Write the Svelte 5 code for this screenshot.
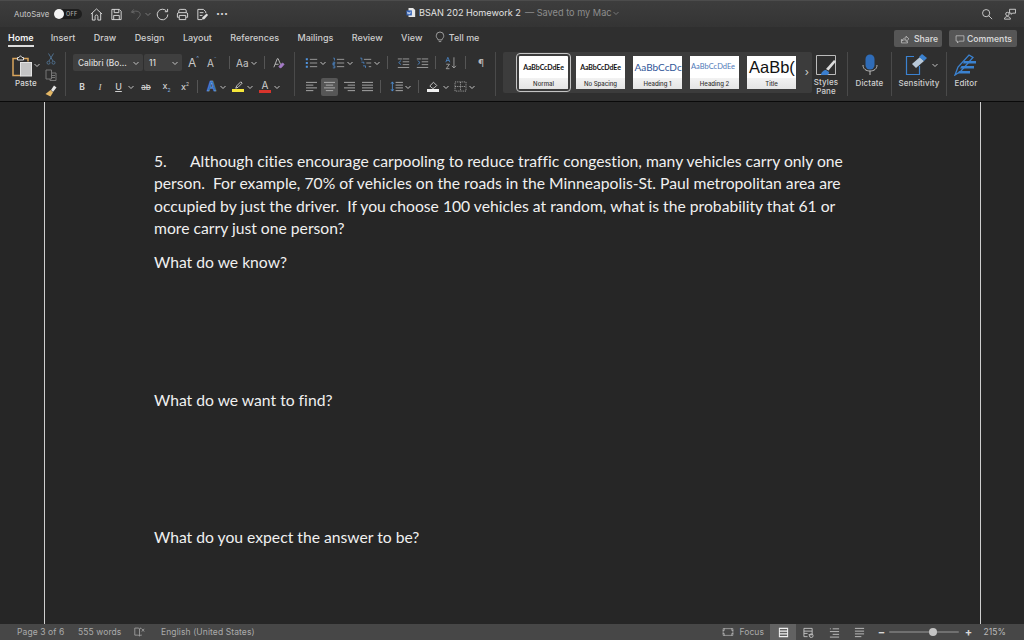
<script>
  const tabs = ['Home','Insert','Draw','Design','Layout','References','Mailings','Review','View'];
</script>

<div class="app">
  <header class="titlebar">
    <div class="qa">
      <span class="autosave">AutoSave</span>
      <span class="toggle"><i></i><b>OFF</b></span>
      <svg class="ic" viewBox="0 0 14 14"><path d="M1 6.500 7 1l6 5.500M2.500 5.500v7.500h3V9c0-2 3-2 3 0v4h3V5.500"/></svg>
      <svg class="ic" viewBox="0 0 14 14"><path d="M2 1.500h8l2 2v9H2zM4.500 1.500V5h5V1.500M4 12.500V8h6v4.500"/></svg>
      <svg class="ic dim" viewBox="0 0 14 14"><path d="M4 1.500 1.500 4.500 5 5.500M2 4.500c3-2 9-1.500 9 2.500 0 2-2 3-3.500 5.500"/></svg>
      <svg class="chev" viewBox="0 0 8 8"><path d="M1.500 3 4 5.500 6.500 3"/></svg>
      <svg class="ic" viewBox="0 0 14 14"><path d="M11.500 3.500A5.700 5.700 0 1 0 12.700 7M9.500 4h3V1"/></svg>
      <svg class="ic" viewBox="0 0 14 14"><path d="M3 5V3c0-1 1-1.500 1.500-1.500h5C10.500 1.500 11 2 11 3v2M3 10H1.500V6.500C1.500 5.500 2 5 3 5h8c1 0 1.500.5 1.500 1.500V10H11M3.500 8h7v4.500h-7z"/></svg>
      <svg class="ic" viewBox="0 0 14 14"><path d="M6.500 12.500H2v-11h6l2.500 2.500v1.500M4 5h4M4 8h3"/><path class="solid" d="M6.500 12.500 7 10l4.500-4 1.500 1.500L9 12z"/></svg>
      <span class="more">···</span>
    </div>
    <div class="doc-title">
      <svg class="docicon" viewBox="0 0 12 12"><path fill="#e8e8e8" stroke="none" d="M3 .5h5.500L11 3v8.500H3z"/><rect x=".5" y="3.500" width="6.500" height="6" fill="#2f5fb5" stroke="none"/><path d="M1.500 5l1 3 1-2.400 1 2.400 1-3" stroke="#fff" stroke-width=".7"/></svg>
      <span class="name">BSAN 202 Homework 2</span>
      <span class="saved">— Saved to my Mac</span>
      <svg class="chev savechev" viewBox="0 0 8 8"><path d="M1.500 3 4 5.500 6.500 3"/></svg>
    </div>
    <div class="tb-right">
      <svg class="ic" viewBox="0 0 14 14"><circle cx="6" cy="6" r="4.200"/><path d="m9 9 4 4"/></svg>
      <svg class="ic" viewBox="0 0 14 14"><circle cx="4" cy="7" r="2"/><path d="M.5 13c0-4 7-4 7 0zM6.500 1.500h7V6H10l-1.500 1.500V6H6.500z"/></svg>
    </div>
  </header>

  <nav class="tabbar">
    {#each tabs as t, i}
      <span class="tab" class:active={i === 0}>{t}</span>
    {/each}
    <svg class="bulb" viewBox="0 0 12 14"><path d="M3.500 9.500C2 8 1.500 7 1.500 5.500a4.500 4.500 0 0 1 9 0c0 1.500-.5 2.500-2 4v1h-5zM4.500 12.500h3"/></svg>
    <span class="tab tell">Tell me</span>
    <div class="tab-actions">
      <span class="btn share"><svg viewBox="0 0 14 14"><path d="M2 7v5.500h8.500V10M2.500 10c1-3 3-4.500 6-4.500V3l4 3.800-4 3.700V8C6 8 4 8.500 2.500 10z"/></svg>Share</span>
      <span class="btn comments"><svg viewBox="0 0 14 14"><path d="M1.500 2.500h11v7.500H6L3.500 12.500V10h-2z"/></svg>Comments</span>
    </div>
  </nav>

  <section class="ribbon">
    <div class="g clip">
      <div class="paste">
        <svg class="pasteic" viewBox="0 0 20 22"><path stroke="#d9a55c" stroke-width="1.500" d="M5 3.500H1v17h8"/><path stroke="#d9a55c" stroke-width="1.500" d="M12 3.500h4v3"/><path stroke="#ddd" d="M5.500 5V2.500h1.500L8.500 .7 10 2.500h1.500V5z"/><rect x="8.500" y="7.500" width="11" height="13.500" fill="#c4c4c4" stroke="#e4e4e4"/></svg>
        <svg class="chev" viewBox="0 0 8 8"><path d="M1.500 3 4 5.500 6.500 3"/></svg>
        <span class="lbl">Paste</span>
      </div>
      <div class="clipcol">
        <svg viewBox="0 0 12 12"><path class="scis" d="M3.500 .5 8 8M8.500 .5 4 8"/><circle class="scis" cx="3.500" cy="9.700" r="1.500"/><circle class="scis" cx="8.500" cy="9.700" r="1.500"/></svg>
        <svg viewBox="0 0 12 12"><path class="copy" d="M1 1h5.500v9H1zM6.500 4H11v7.500H5V10M7 6.500h3M7 8.500h3"/></svg>
        <svg viewBox="0 0 12 12"><path stroke="none" fill="#e6e6e6" d="M9 .5l2.500 2L8 7 6 5z"/><path stroke="none" fill="#e4b765" d="M5.500 5 8 7.500 5.500 11.500 .5 9z"/></svg>
      </div>
    </div>
    <i class="sep"></i>
    <div class="g font">
      <div class="row r1">
        <span class="select fontname">Calibri (Bo...<svg class="chev" viewBox="0 0 8 8"><path d="M1.500 3 4 5.500 6.500 3"/></svg></span>
        <span class="select fontsize">11<svg class="chev" viewBox="0 0 8 8"><path d="M1.500 3 4 5.500 6.500 3"/></svg></span>
        <span class="glyph big">A<sup>^</sup></span>
        <span class="glyph mid">A<sup>ˇ</sup></span>
        <i class="vs"></i>
        <span class="glyph aa">Aa<svg class="chev" viewBox="0 0 8 8"><path d="M1.500 3 4 5.500 6.500 3"/></svg></span>
        <i class="vs"></i>
        <svg class="clear" viewBox="0 0 14 14"><path d="M1 12 5 2h1l3 7M2.500 8.500h4"/><path class="eraser" d="m7 11 4-4 2 1.500-3.500 4H8z"/></svg>
      </div>
      <div class="row r2">
        <b class="f b">B</b><em class="f i">I</em>
        <span class="f u">U</span><svg class="chev cu" viewBox="0 0 8 8"><path d="M1.500 3 4 5.500 6.500 3"/></svg>
        <s class="f st">ab</s>
        <span class="f sc">x<sub>2</sub></span>
        <span class="f sc2">x<sup>2</sup></span>
        <i class="vs s2"></i>
        <span class="tx fx">A</span><svg class="chev" viewBox="0 0 8 8"><path d="M1.500 3 4 5.500 6.500 3"/></svg>
        <span class="color"><svg viewBox="0 0 12 8"><path d="M3 7.500 4 5l4.500-4.500 1.500 1.500L5.500 6.500z"/></svg><u class="yellow"></u></span><svg class="chev c2" viewBox="0 0 8 8"><path d="M1.500 3 4 5.500 6.500 3"/></svg>
        <span class="color fa">A<u class="red"></u></span><svg class="chev c2" viewBox="0 0 8 8"><path d="M1.500 3 4 5.500 6.500 3"/></svg>
      </div>
    </div>
    <i class="sep"></i>
    <div class="g para">
      <div class="row p1">
        <svg class="pi" viewBox="0 0 16 14"><path d="M6 2.500h9M6 7h9M6 11.500h9"/><path class="blue bf" d="M1 1h2.500v2.500H1zM1 5.700h2.500v2.500H1zM1 10.300h2.500v2.500H1z"/></svg><svg class="chev cp" viewBox="0 0 8 8"><path d="M1.500 3 4 5.500 6.500 3"/></svg>
        <svg class="pi" viewBox="0 0 16 14"><path d="M6 2.500h9M6 7h9M6 11.500h9"/><path class="blue" d="M1.500 1h1.500v3M1 6h2.500v1.500H1V9h2.500M1 10.500h2.500V13H1"/></svg><svg class="chev cp" viewBox="0 0 8 8"><path d="M1.500 3 4 5.500 6.500 3"/></svg>
        <svg class="pi" viewBox="0 0 16 14"><path d="M6 2.500h9M9 7h6M12 11.500h3"/><path class="blue" d="M1.500 1h2v3M3 6h3v2M5 10.500h3v2.500"/></svg><svg class="chev cp" viewBox="0 0 8 8"><path d="M1.500 3 4 5.500 6.500 3"/></svg>
        <i class="vs v1"></i>
        <svg class="pi ind" viewBox="0 0 16 14"><path d="M7 2h8M7 5.500h8M7 9h8M1 12.500h14M1 2h5"/><path class="blue" d="M5 4 2 6.500 5 9"/></svg>
        <svg class="pi" viewBox="0 0 16 14"><path d="M7 2h8M7 5.500h8M7 9h8M1 12.500h14M1 2h5"/><path class="blue" d="M2 4l3 2.500L2 9"/></svg>
        <i class="vs v2"></i>
        <svg class="pi sort" viewBox="0 0 16 16"><path class="blue" d="M1 7l2.500-6L6 7M2 5h3"/><path d="M1.500 9.500h4L1.500 15h4M11 1v13M8.500 11.500 11 14l2.500-2.500"/></svg>
        <i class="vs v3"></i>
        <span class="pil">¶</span>
      </div>
      <div class="row p2">
        <svg class="pi al a0" viewBox="0 0 14 12"><path d="M1 1.500h12M1 4.500h8M1 7.500h12M1 10.500h8"/></svg>
        <span class="al-on"><svg class="pi al" viewBox="0 0 14 12"><path d="M1 1.500h12M3 4.500h8M1 7.500h12M3 10.500h8"/></svg></span>
        <svg class="pi al a1" viewBox="0 0 14 12"><path d="M1 1.500h12M5 4.500h8M1 7.500h12M5 10.500h8"/></svg>
        <svg class="pi al" viewBox="0 0 14 12"><path d="M1 1.500h12M1 4.500h12M1 7.500h12M1 10.500h12"/></svg>
        <i class="vs v4"></i>
        <svg class="pi al" viewBox="0 0 14 12"><path d="M6 1.500h8M6 4.500h8M6 7.500h8M6 10.500h8"/><path class="blue" d="M2.500 1v10M1 3l1.500-2L4 3M1 9l1.500 2L4 9"/></svg><svg class="chev cs" viewBox="0 0 8 8"><path d="M1.500 3 4 5.500 6.500 3"/></svg>
        <i class="vs v5"></i>
        <span class="color fill"><svg viewBox="0 0 12 8"><path d="M2 5 6 1l3.500 3.500-3 3H4.500z"/></svg><u class="white"></u></span><svg class="chev cf" viewBox="0 0 8 8"><path d="M1.500 3 4 5.500 6.500 3"/></svg>
        <svg class="pi al" viewBox="0 0 14 12"><path stroke-dasharray="1 1" d="M1 1h12v10H1zM7 1v10M1 6h12"/></svg><svg class="chev cb" viewBox="0 0 8 8"><path d="M1.500 3 4 5.500 6.500 3"/></svg>
      </div>
    </div>
    <i class="sep"></i>
    <div class="gallery">
      <div class="style sel"><div class="sample sm">AaBbCcDdEe</div><div class="sname">Normal</div></div>
      <div class="style"><div class="sample sm">AaBbCcDdEe</div><div class="sname">No Spacing</div></div>
      <div class="style"><div class="sample h1">AaBbCcDc</div><div class="sname">Heading 1</div></div>
      <div class="style"><div class="sample h2">AaBbCcDdEe</div><div class="sname">Heading 2</div></div>
      <div class="style"><div class="sample ttl">AaBb(</div><div class="sname">Title</div></div>
      <span class="gnext">›</span>
    </div>
    <div class="tool pane">
      <svg viewBox="0 0 22 22"><path d="M1.500 1.500h19v19h-19z" stroke="#bbb"/><path d="m11 15 8-9 2 1.500-7.500 9z" stroke="none" fill="#ddd"/><path d="M6 21c0-3 3-5 5-5l3 2c0 2-1 3-2 3z" stroke="none" fill="#3b7fcf"/></svg>
      <span>Styles<br/>Pane</span>
    </div>
    <i class="sep"></i>
    <div class="tool dict">
      <svg viewBox="0 0 16 22"><rect x="3.500" y=".5" width="9" height="15" rx="4.500" stroke="none" fill="#2f6cb8"/><path d="M1 11c0 4 3 6 7 6s7-2 7-6M8 17v4" stroke="#bbb"/></svg>
      <span>Dictate</span>
    </div>
    <i class="sep"></i>
    <div class="tool sens">
      <div class="sensrow">
        <svg viewBox="0 0 24 22"><path d="M9 2.500H1.500v18h13V12" stroke="#3b82d0" stroke-width="1.200"/><path d="m7 10 8-7 4 4-8 7z" stroke="none" fill="#b8c8d8"/><path d="m14 3 3-3 5 4-3 3z" stroke="none" fill="#3b82d0"/></svg>
        <svg class="chev" viewBox="0 0 8 8"><path d="M1.500 3 4 5.500 6.500 3"/></svg>
      </div>
      <span>Sensitivity</span>
    </div>
    <i class="sep"></i>
    <div class="tool editor">
      <svg viewBox="0 0 24 22"><path d="M1 21 4 13 15 1l4 2.500L7 17z" stroke="#3b82d0" stroke-width="1.300"/><path d="M10 7h12v2.500H9zM7.500 12H20v2.500H6zM5 17h11v2.500H4z" stroke="none" fill="#3b82d0"/></svg>
      <span>Editor</span>
    </div>
  </section>

  <main class="page-area">
    <article class="page">
      <p class="q"><span class="num">5.</span>Although cities encourage carpooling to reduce traffic congestion, many vehicles carry only one<br/>person.  For example, 70% of vehicles on the roads in the Minneapolis-St. Paul metropolitan area are<br/>occupied by just the driver.  If you choose 100 vehicles at random, what is the probability that 61 or<br/>more carry just one person?</p>
      <p class="a first">What do we know?</p>
      <p class="a second">What do we want to find?</p>
      <p class="a third">What do you expect the answer to be?</p>
    </article>
  </main>

  <footer class="status">
    <span class="pg">Page 3 of 6</span>
    <span class="wc">555 words</span>
    <svg class="proof" viewBox="0 0 14 12"><path d="M1 1h4c1 0 1.500.5 2 1 .5-.5 1-1 2-1v1M1 1v9h4c1 0 1.500.5 2 1V2M7 11c.5-.5 1-1 2-1h1M10 2l3 3.500M13 2l-3 3.500"/></svg>
    <span class="lang">English (United States)</span>
    <div class="st-right">
      <svg class="focus" viewBox="0 0 16 12"><path d="M1.500 1.500h13v9h-13zM1 4h2V1M13 1v3h2M1 8h2v3M15 8h-2v3"/></svg>
      <span class="fl">Focus</span>
      <span class="view on"><svg viewBox="0 0 12 12"><path d="M1.500 1.500h9v9h-9zM1.500 4.500h9M1.500 7.500h9"/></svg></span>
      <span class="view web"><svg viewBox="0 0 12 12"><path d="M1 1.500h9v7H6M1 1.500v9h4M1 4.500h9M1 7h4"/><circle cx="9" cy="9.500" r="2"/></svg></span>
      <span class="view outl"><svg viewBox="0 0 12 12"><path d="M4 2h7M1 5h10M4 8h7M1 11h10M1 2h1"/></svg></span>
      <span class="view drft"><svg viewBox="0 0 12 12"><path d="M1 1.500h10M1 4.500h10M1 7.500h10M1 10.500h7"/></svg></span>
      <span class="zm">−</span>
      <span class="slider"><i class="knob"></i></span>
      <span class="zm plus">+</span>
      <span class="pct">215%</span>
    </div>
  </footer>
</div>

<style>
  :global(body) { margin: 0; background: #262626; }
  .app { width: 1024px; height: 640px; display: flex; flex-direction: column; overflow: hidden; font-family: Inter, "Liberation Sans", sans-serif; color: #d8d8d8; font-size: 9px; background: #262626; }
  svg { display: block; flex: none; fill: none; stroke: currentColor; }
  .titlebar { height: 27px; flex: none; position: relative; display: flex; align-items: center; justify-content: space-between; background: linear-gradient(#3d3d3d, #343434); border-top: 1px solid #4c4c4c; box-sizing: border-box; }
  .qa { display: flex; align-items: center; padding-left: 14px; }
  .autosave { font-size: 7.800px; color: #c8c8c8; width: 40px; }
  .toggle { width: 28px; height: 10px; border-radius: 5px; background: #1e1e1e; position: relative; margin-right: 8px; }
  .toggle i { position: absolute; left: 0; top: 0; width: 10px; height: 10px; border-radius: 50%; background: #f4f4f4; }
  .toggle b { position: absolute; left: 12px; top: 2px; font-size: 5.500px; font-weight: 500; color: #aaa; line-height: 6px; letter-spacing: .3px; }
  .ic { width: 13px; height: 13px; color: #dcdcdc; margin-right: 7px; stroke-width: 1; }
  .ic .solid { fill: #dcdcdc; stroke: none; }
  .ic.dim { color: #686868; margin-right: 1px; }
  .chev { width: 8px; height: 8px; color: #c4c4c4; }
  .qa .chev { margin: 0 4px 0 0; color: #777; }
  .more { font-size: 12px; font-weight: 700; line-height: 8px; }
  .doc-title { position: absolute; left: 406px; top: 6px; display: flex; align-items: center; }
  .docicon { width: 10px; height: 11px; margin-right: 3px; }
  .name { font-size: 9.150px; color: #e2e2e2; white-space: pre; margin-right: 4px; }
  .saved { font-size: 9.200px; color: #8d8d8d; }
  .savechev { margin-left: 0; color: #777; }
  .tb-right { display: flex; gap: 6px; margin-right: 3px; align-items: center; }
  .tb-right .ic { margin-right: 5px; width: 12px; height: 12px; }

  .tabbar { height: 23px; flex: none; background: #2f2f2f; display: flex; align-items: center; position: relative; box-sizing: border-box; }
  .tab { font-size: 9px; font-weight: 500; color: #cdcdcd; margin-right: 18.400px; margin-bottom: 3px; white-space: nowrap; }
  .tab:first-child { margin-left: 8px; margin-right: 17px; }
  .tab.active { color: #f2f2f2; font-weight: 600; position: relative; }
  .tab.active::after { content: ""; position: absolute; left: 0; right: 0; bottom: -4px; height: 2px; background: #dcdcdc; }
  .bulb { width: 10px; height: 12px; color: #c0c0c0; margin: 0 4px 3px -6px; stroke-width: .9; }
  .tab-actions { margin-left: auto; margin-right: 7px; display: flex; gap: 7px; }
  .btn { height: 17px; display: flex; align-items: center; gap: 4px; box-sizing: border-box; padding-left: 6px; background: #565656; border-radius: 2px; font-size: 8.600px; font-weight: 600; color: #d4d4d4; }
  .share { width: 48px; }
  .comments { width: 68px; gap: 2px; }
  .btn svg { width: 10px; height: 10px; stroke-width: .9; }

  .ribbon { height: 52px; flex: none; box-sizing: border-box; background: #2f2f2f; border-bottom: 1px solid #0a0a0a; display: flex; align-items: flex-start; padding-top: 1px; position: relative; }
  .sep { width: 1px; height: 44px; margin-top: 1px; background: #4a4a4a; flex: none; }
  .g { display: flex; flex: none; }
  .clip { width: 65px; }
  .paste { width: 45px; position: relative; height: 44px; }
  .pasteic { position: absolute; left: 12px; top: 4px; width: 20px; height: 22px; }
  .paste .chev { position: absolute; left: 33px; top: 10px; }
  .lbl { position: absolute; left: 15px; top: 27px; font-size: 8px; font-weight: 500; letter-spacing: .1px; }
  .clipcol { display: flex; flex-direction: column; gap: 4px; padding-top: 2px; }
  .clipcol svg { width: 12px; height: 12px; }
  .scis { stroke: #4f6f8c; }
  .copy { stroke: #777; }

  .font { width: 228px; flex-direction: column; padding-left: 7px; box-sizing: border-box; }
  .row { display: flex; align-items: center; }
  .r1 { height: 17px; margin-top: 3px; }
  .r2 { height: 17px; margin-top: 7px; padding-left: 3px; }
  .select { height: 17px; background: #3f3f3f; border-radius: 2px; display: flex; align-items: center; justify-content: space-between; box-sizing: border-box; padding: 0 3px 0 5px; font-size: 8.300px; font-weight: 500; color: #dcdcdc; margin-right: 1px; }
  .fontname { width: 70px; }
  .fontsize { width: 38px; }
  .glyph { color: #c8c8c8; display: inline-flex; align-items: center; }
  .glyph sup { font-size: 6px; color: #7aa6d8; line-height: 1; align-self: flex-start; }
  .big { font-size: 12px; margin-left: 5px; width: 18px; }
  .mid { font-size: 10px; margin-left: 1px; width: 15px; }
  .vs { width: 1px; height: 13px; background: #555; flex: none; margin: 0 7px; }
  .aa { font-size: 10px; gap: 1px; margin-left: -1px; margin-right: -1px; }
  .clear { width: 12px; height: 12px; margin-left: 1px; color: #c8c8c8; }
  .eraser { fill: #a67cc9; stroke: #a67cc9; }
  .f { font-size: 9px; font-style: normal; font-weight: 500; color: #cfcfcf; text-align: center; }
  .b { width: 12px; font-weight: 700; font-size: 8.500px; }
  .i { width: 12px; margin-left: 6px; font-family: "Liberation Serif", serif; font-style: italic; }
  .u { width: 11px; margin-left: 7px; text-decoration: underline; }
  .r2 .chev { margin-left: 1px; }
  .r2 .cu { margin-left: 3px; }
  .r2 .c2 { margin-left: 2px; }
  .st { width: 14px; margin-left: 4px; font-size: 8px; }
  .sc { margin-left: 9px; width: 9px; }
  .sc sub { font-size: 5px; color: #7aa6d8; }
  .sc2 { margin-left: 10px; width: 8px; }
  .sc2 sup { font-size: 5px; color: #bbb; }
  .vs.s2 { margin: 0 7px 0 8px; }
  .tx { font-size: 13px; font-weight: 700; color: #2d6bc4; width: 13px; text-align: center; line-height: 1; -webkit-text-stroke: .3px #9ec3ee; }
  .color { display: flex; flex-direction: column; align-items: center; width: 12px; margin-left: 5px; }
  .color svg { width: 11px; height: 8px; color: #cfcfcf; }
  .color u { display: block; width: 12px; height: 3px; margin-top: 0; }
  .yellow { background: #f5e63a; }
  .red { background: #d8342c; }
  .white { background: #f0f0f0; }
  .fa { font-size: 10px; line-height: 9px; color: #cfcfcf; margin-left: 5px; }

  .para { width: 200px; flex-direction: column; padding-left: 10px; box-sizing: border-box; }
  .p1 { height: 17px; margin-top: 3px; }
  .p2 { height: 17px; margin-top: 7px; }
  .pi { width: 13px; height: 12px; color: #bdbdbd; stroke-width: .9; }
  .blue { stroke: #4f93dd; }
  .bf { fill: #4f93dd; stroke: none; }
  .cp { margin: 0 5px 0 1px; }
  .vs.v1 { margin: 0 9px 0 1px; }
  .ind { margin-right: 6px; }
  .vs.v2 { margin: 0 9px 0 6px; }
  .sort { height: 14px; }
  .vs.v3 { margin: 0 12px 0 7px; }
  .pil { font-size: 10px; color: #b8b8b8; }
  .al { width: 13px; height: 11px; }
  .a0 { margin-right: 3px; }
  .a1 { margin-right: 5px; }
  .al-on { width: 17px; height: 18px; background: #565656; border-radius: 2px; display: flex; align-items: center; justify-content: center; margin-right: 5px; }
  .vs.v4 { margin: 0 9px 0 6px; }
  .cs { margin: 0 5px 0 1px; }
  .vs.v5 { margin: 0 8px 0 1px; }
  .fill { margin-left: 0; }
  .cf { margin: 0 4px 0 3px; }
  .cb { margin-left: 1px; }

  .gallery { margin-left: 7px; width: 309px; height: 41px; margin-top: 1px; flex: none; background: #3c3c3c; border-radius: 2px; display: flex; align-items: center; gap: 8px; padding-left: 16px; box-sizing: border-box; position: relative; }
  .style { width: 49px; height: 33px; background: #fff; color: #111; flex: none; display: flex; flex-direction: column; overflow: hidden; }
  .style.sel { outline: 1px solid #c4c4c4; outline-offset: 2px; border-radius: 1px; }
  .sample { height: 22px; line-height: 22px; text-align: center; white-space: nowrap; overflow: hidden; font-family: Lato, "Liberation Sans", sans-serif; }
  .sm { font-size: 7px; font-weight: 700; letter-spacing: -.1px; }
  .h1 { font-size: 10px; color: #2f5597; text-align: left; padding-left: 1.500px; }
  .h2 { font-size: 7.500px; color: #4f79b8; text-align: left; padding-left: 1px; }
  .ttl { font-size: 16.500px; color: #111; text-align: left; padding-left: 2px; font-family: "Liberation Sans", sans-serif; }
  .sname { flex: 1; background: linear-gradient(#f2f2f2, #e4e4e4); font-size: 6px; font-weight: 500; text-align: center; color: #333; line-height: 11px; }
  .gnext { position: absolute; right: 3px; top: 13px; font-size: 11px; color: #d0d0d0; }

  .tool { display: flex; flex-direction: column; align-items: center; flex: none; font-size: 8px; font-weight: 500; color: #cfcfcf; text-align: center; line-height: 9px; letter-spacing: .1px; }
  .pane { width: 28px; margin-right: 7px; padding-top: 3px; }
  .pane svg { width: 22px; height: 22px; margin-bottom: 2px; }
  .dict { width: 43px; padding-top: 3px; }
  .dict svg { width: 16px; height: 22px; margin-bottom: 3px; }
  .sens { width: 54px; padding-top: 3px; }
  .sensrow { display: flex; align-items: center; gap: 2px; height: 22px; margin-bottom: 3px; margin-left: 6px; }
  .sensrow svg:first-child { width: 24px; height: 22px; }
  .editor { width: 38px; padding-top: 3px; }
  .editor svg { width: 24px; height: 22px; margin-bottom: 3px; }

  .page-area { flex: 1; background: #262626; min-height: 0; padding-left: 44px; }
  .page { width: 937px; height: 100%; border-left: 1px solid #cfcfcf; border-right: 1px solid #cfcfcf; box-sizing: border-box; padding: 48px 0 0 109px; font-family: Lato, "Open Sans", sans-serif; font-size: 15.700px; color: #f0f0f0; font-variant-ligatures: none; }
  .page p { margin: 0; line-height: 22.400px; white-space: pre; }
  .num { display: inline-block; width: 36px; }
  .page .first { margin-top: 11px; }
  .page .second { margin-top: 116px; }
  .page .third { margin-top: 115px; }

  .status { height: 16px; flex: none; background: #474747; display: flex; align-items: center; font-size: 8.500px; letter-spacing: .1px; color: #ababab; }
  .pg { margin-left: 17px; width: 61px; }
  .wc { width: 56px; }
  .proof { width: 11px; height: 10px; color: #c0c0c0; stroke-width: .8; margin-right: 16px; }
  .st-right { margin-left: auto; display: flex; align-items: center; height: 100%; }
  .focus { width: 12px; height: 10px; color: #c8c8c8; stroke-width: .8; margin-right: 5px; }
  .fl { width: 31px; }
  .view { height: 16px; display: flex; align-items: center; justify-content: center; color: #d0d0d0; }
  .view svg { width: 11px; height: 11px; stroke-width: .9; }
  .view.on { width: 26px; background: #626262; color: #f0f0f0; }
  .view.on svg { stroke-width: 1.100; }
  .web { width: 25px; }
  .outl { width: 27px; }
  .drft { width: 22px; }
  .zm { font-size: 11px; font-weight: 700; color: #d8d8d8; margin-left: 7px; width: 8px; text-align: center; }
  .slider { width: 70px; height: 2px; margin-left: 4px; background: #707070; position: relative; border-radius: 1px; }
  .knob { position: absolute; left: 40px; top: -3px; width: 8px; height: 8px; border-radius: 50%; background: #c4c4c4; }
  .zm.plus { margin-left: 5px; }
  .pct { margin-left: 11px; margin-right: 18px; color: #bbb; }
</style>
